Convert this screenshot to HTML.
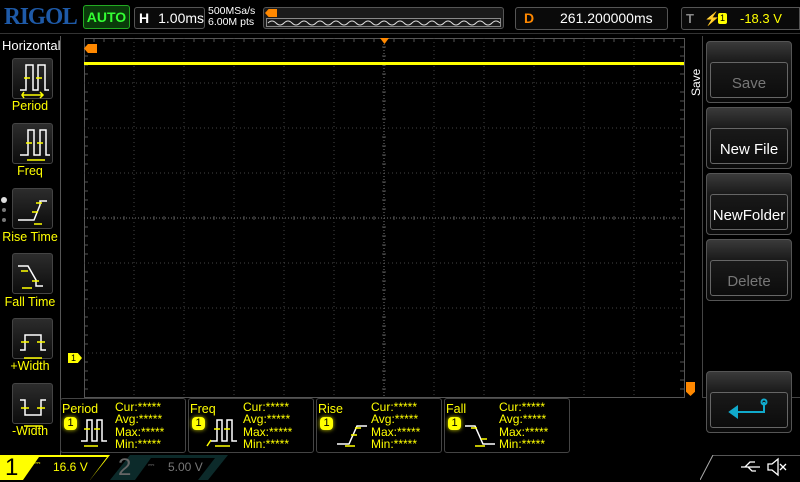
<!DOCTYPE html>
<html><head><meta charset="utf-8"><style>
*{margin:0;padding:0;box-sizing:border-box}
body{width:800px;height:480px;background:#000;overflow:hidden;position:relative;font-family:"Liberation Sans",sans-serif}
.a{position:absolute}
.btn{position:absolute;left:12px;width:41px;height:41px;border:1px solid #444;border-radius:3px;background:linear-gradient(#2c2c2c,#0c0c0c)}
.lbl{position:absolute;left:0;width:60px;text-align:center;color:#ff0;font-size:12.5px}
.sk{position:absolute;left:706px;width:86px;height:62px;border:1px solid #555;border-radius:4px;background:linear-gradient(#3a3a3a 0,#1a1a1a 20px,#0a0a0a)}
.sk div{position:absolute;left:3px;right:3px;top:20px;bottom:4px;border:1px solid #666;border-radius:3px;color:#fff;font-size:15px;text-align:center;line-height:42px}
.mb{position:absolute;top:398px;width:126px;height:55px;border:1px solid #444;border-radius:3px;color:#ff0;font-size:12.5px}
.mb .t{position:absolute;left:1px;top:3px}
.mb .n{position:absolute;left:3px;top:18px;width:13px;height:13px;background:#ff0;color:#000;border-radius:4px;font-size:11px;text-align:center;line-height:13px;box-shadow:0 0 4px #cc0}
.mb .v{position:absolute;left:54px;top:2px;line-height:12.3px;font-size:12px}
</style></head><body>
<div class="a" style="left:4px;top:4px;color:#1e5aa8;font-family:'Liberation Serif',serif;font-weight:bold;font-size:24px;letter-spacing:-1px;transform:scaleX(0.97);transform-origin:left">RIGOL</div>
<div class="a" style="left:83px;top:5px;width:47px;height:24px;border:1px solid #2a2;background:#0a3a0a;border-radius:3px;color:#3f3;font-weight:bold;font-size:14px;text-align:center;line-height:22px">AUTO</div>
<div class="a" style="left:134px;top:7px;width:71px;height:22px;border:1px solid #555;border-radius:3px;background:#0a0a0a;color:#fff;font-size:14px;line-height:20px"><b style="padding-left:4px">H</b><span style="padding-left:9px">1.00ms</span></div>
<div class="a" style="left:208px;top:6px;color:#fff;font-size:10.5px;line-height:11px">500MSa/s<br>6.00M pts</div>
<div class="a" style="left:263px;top:7px;width:241px;height:22px;border:1px solid #555;border-radius:3px;background:#1a1a1a"></div>
<div class="a" style="left:265px;top:9px;width:12px;height:8px;background:#f80;clip-path:polygon(0 50%,30% 0,100% 0,100% 100%,30% 100%)"></div>
<svg class="a" style="left:266px;top:18px" width="236" height="9"><rect x="0.5" y="0.5" width="234" height="8" fill="none" stroke="#888"/><path d="M2 5 q4 -4 8 0 q4 4 8 0 q4 -4 8 0 q4 4 8 0 q4 -4 8 0 q4 4 8 0 q4 -4 8 0 q4 4 8 0 q4 -4 8 0 q4 4 8 0 q4 -4 8 0 q4 4 8 0 q4 -4 8 0 q4 4 8 0 q4 -4 8 0 q4 4 8 0 q4 -4 8 0 q4 4 8 0 q4 -4 8 0 q4 4 8 0 q4 -4 8 0 q4 4 8 0 q4 -4 8 0 q4 4 8 0 q4 -4 8 0 q4 4 8 0 q4 -4 8 0 q4 4 8 0 q4 -4 8 0" fill="none" stroke="#ddd" stroke-width="1"/></svg>
<div class="a" style="left:515px;top:7px;width:153px;height:23px;border:1px solid #555;border-radius:3px;background:#0a0a0a;font-size:14px;line-height:21px"><b style="color:#f80;padding-left:8px">D</b><span style="color:#fff;position:absolute;left:44px">261.200000ms</span></div>
<div class="a" style="left:681px;top:7px;width:119px;height:23px;border:1px solid #555;border-radius:3px 0 0 3px;background:#0a0a0a;font-size:13px;line-height:21px"><b style="color:#888;padding-left:4px">T</b><span style="color:#ff0;position:absolute;left:22px">⚡</span><span style="position:absolute;left:36px;top:5px;width:9px;height:11px;background:#ff0;color:#000;font-size:9px;line-height:11px;text-align:center;border-radius:2px">1</span><span style="color:#ff0;position:absolute;left:58px">-18.3 V</span></div>
<div class="a" style="left:0;top:33px;width:800px;height:1px;background:#333"></div>
<div class="a" style="left:60px;top:36px;width:1px;height:420px;background:#555"></div>
<div class="a" style="left:2px;top:38px;color:#fff;font-size:13px">Horizontal</div>
<div class="btn" style="top:58px"></div><div class="btn" style="top:123px"></div><div class="btn" style="top:188px"></div><div class="btn" style="top:253px"></div><div class="btn" style="top:318px"></div><div class="btn" style="top:383px"></div>
<svg class="a" style="left:12px;top:58px" width="41" height="390" fill="none" stroke-width="1.5">
<g stroke="#fff"><path d="M8 32H14V7H21V32H26V7H33V32H37"/><path d="M8 97H16V72H22V97H28V72H34V97H38"/><path d="M6 162H22L28 147V143H35"/><path d="M6 208H16L24 222V228H31"/><path d="M8 292H13V277H29V292H34"/><path d="M8 342H13V357H29V342H34"/></g>
<g stroke="#ff0"><path d="M12 20H18M24 20H30M11 37H30M12 34L10 37L12 40M28 34L31 37L28 40"/><path d="M14 85H20M25 85H31M15 102H33"/><path d="M20 154H26M24 145H30M22 166H30"/><path d="M9 213H16M20 223H27M10 230H20"/><path d="M9 284H17M25 284H33M12 300H30"/><path d="M9 350H17M25 350H33M12 368H30"/></g>
</svg>
<div class="lbl" style="top:99px">Period</div><div class="lbl" style="top:164px">Freq</div><div class="lbl" style="top:230px">Rise Time</div><div class="lbl" style="top:295px">Fall Time</div><div class="lbl" style="top:359px">+Width</div><div class="lbl" style="top:424px">-Width</div>
<div class="a" style="left:1px;top:197px;width:6px;height:6px;border-radius:3px;background:#ddd"></div>
<div class="a" style="left:2px;top:208px;width:4px;height:4px;border-radius:2px;background:#777"></div>
<div class="a" style="left:2px;top:218px;width:4px;height:4px;border-radius:2px;background:#777"></div>
<svg class="a" style="left:84px;top:38px" width="602" height="362">
<rect x="0.5" y="0.5" width="600" height="359" fill="none" stroke="#555"/>
<g stroke="#444" stroke-dasharray="1 3">
<path d="M50 0V360M100 0V360M150 0V360M200 0V360M250 0V360M350 0V360M400 0V360M450 0V360M500 0V360M550 0V360"/>
<path d="M0 45H600M0 90H600M0 135H600M0 225H600M0 270H600M0 315H600"/>
</g>
<g stroke="#777" stroke-dasharray="1 2"><path d="M300 0V360M0 180H600"/></g>
<g stroke="#555"><path d="M10 0v4M20 0v4M30 0v4M40 0v4M60 0v4M70 0v4M80 0v4M90 0v4M110 0v4M120 0v4M130 0v4M140 0v4M160 0v4M170 0v4M180 0v4M190 0v4M210 0v4M220 0v4M230 0v4M240 0v4M260 0v4M270 0v4M280 0v4M290 0v4M310 0v4M320 0v4M330 0v4M340 0v4M360 0v4M370 0v4M380 0v4M390 0v4M410 0v4M420 0v4M430 0v4M440 0v4M460 0v4M470 0v4M480 0v4M490 0v4M510 0v4M520 0v4M530 0v4M540 0v4M560 0v4M570 0v4M580 0v4M590 0v4"/>
<path d="M0 9h4M0 18h4M0 27h4M0 36h4M0 54h4M0 63h4M0 72h4M0 81h4M0 99h4M0 108h4M0 117h4M0 126h4M0 144h4M0 153h4M0 162h4M0 171h4M0 189h4M0 198h4M0 207h4M0 216h4M0 234h4M0 243h4M0 252h4M0 261h4M0 279h4M0 288h4M0 297h4M0 306h4M0 324h4M0 333h4M0 342h4M0 351h4"/>
<path d="M596 9h4M596 18h4M596 27h4M596 36h4M596 54h4M596 63h4M596 72h4M596 81h4M596 99h4M596 108h4M596 117h4M596 126h4M596 144h4M596 153h4M596 162h4M596 171h4M596 189h4M596 198h4M596 207h4M596 216h4M596 234h4M596 243h4M596 252h4M596 261h4M596 279h4M596 288h4M596 297h4M596 306h4M596 324h4M596 333h4M596 342h4M596 351h4"/>
<path d="M10 178v4M20 178v4M30 178v4M40 178v4M60 178v4M70 178v4M80 178v4M90 178v4M110 178v4M120 178v4M130 178v4M140 178v4M160 178v4M170 178v4M180 178v4M190 178v4M210 178v4M220 178v4M230 178v4M240 178v4M260 178v4M270 178v4M280 178v4M290 178v4M310 178v4M320 178v4M330 178v4M340 178v4M360 178v4M370 178v4M380 178v4M390 178v4M410 178v4M420 178v4M430 178v4M440 178v4M460 178v4M470 178v4M480 178v4M490 178v4M510 178v4M520 178v4M530 178v4M540 178v4M560 178v4M570 178v4M580 178v4M590 178v4"/>
<path d="M298 9h4M298 18h4M298 27h4M298 36h4M298 54h4M298 63h4M298 72h4M298 81h4M298 99h4M298 108h4M298 117h4M298 126h4M298 144h4M298 153h4M298 162h4M298 171h4M298 189h4M298 198h4M298 207h4M298 216h4M298 234h4M298 243h4M298 252h4M298 261h4M298 279h4M298 288h4M298 297h4M298 306h4M298 324h4M298 333h4M298 342h4M298 351h4"/>
</g>
<rect x="0" y="24" width="600" height="3" fill="#ff0"/>
</svg>
<div class="a" style="left:84px;top:44px;width:13px;height:9px;background:#f80;clip-path:polygon(0 50%,30% 0,100% 0,100% 100%,30% 100%)"></div>
<div class="a" style="left:380px;top:38px;width:9px;height:6px;background:#f80;clip-path:polygon(0 0,100% 0,50% 100%)"></div>
<div class="a" style="left:68px;top:353px;width:14px;height:10px;background:#ff0;clip-path:polygon(0 0,70% 0,100% 50%,70% 100%,0 100%);color:#000;font-size:9px;line-height:10px;padding-left:3px">1</div>
<div class="a" style="left:686px;top:382px;width:9px;height:14px;background:#f80;clip-path:polygon(0 0,100% 0,100% 70%,50% 100%,0 70%)"></div>
<div class="a" style="left:702px;top:36px;width:1px;height:362px;background:#444"></div>
<div class="a" style="left:702px;top:397px;width:98px;height:1px;background:#444"></div>
<div class="a" style="color:#fff;font-size:12px;transform:rotate(-90deg);transform-origin:left top;top:96px;left:689px">Save</div>
<div class="sk" style="top:41px"><div style="color:#777">Save</div></div>
<div class="sk" style="top:107px"><div>New File</div></div>
<div class="sk" style="top:173px"><div>NewFolder</div></div>
<div class="sk" style="top:239px"><div style="color:#777">Delete</div></div>
<div class="sk" style="top:371px"><div></div></div>
<svg class="a" style="left:728px;top:398px" width="44" height="24" fill="none" stroke="#1ac" stroke-width="2"><path d="M36 4V14H8"/><circle cx="36" cy="4" r="2.5"/><path d="M2 14L9 9V19Z" fill="#1ac"/></svg>
<div class="mb" style="left:60px"><span class="t">Period</span><span class="n">1</span><span class="v">Cur:*****<br>Avg:*****<br>Max:*****<br>Min:*****</span>
<svg class="a" style="left:18px;top:18px" width="34" height="34" fill="none"><path d="M2 24H8V3H13V24H18V3H23V24H28" stroke="#fff" stroke-width="1.5"/><path d="M5 12H11M15 12H21M5 29H19" stroke="#ff0" stroke-width="1.5"/></svg></div>
<div class="mb" style="left:188px"><span class="t">Freq</span><span class="n">1</span><span class="v">Cur:*****<br>Avg:*****<br>Max:*****<br>Min:*****</span>
<svg class="a" style="left:16px;top:18px" width="34" height="34" fill="none"><path d="M6 24H12V3H17V24H22V3H27V24H32" stroke="#fff" stroke-width="1.5"/><path d="M9 12H15M19 12H25M10 29H25M2 29L6 23" stroke="#ff0" stroke-width="1.5"/></svg></div>
<div class="mb" style="left:316px"><span class="t">Rise</span><span class="n">1</span><span class="v">Cur:*****<br>Avg:*****<br>Max:*****<br>Min:*****</span>
<svg class="a" style="left:18px;top:18px" width="34" height="34" fill="none"><path d="M2 27H14L22 9H32" stroke="#fff" stroke-width="1.5"/><path d="M16 18H22M20 11H26M10 29H20" stroke="#ff0" stroke-width="1.5"/></svg></div>
<div class="mb" style="left:444px"><span class="t">Fall</span><span class="n">1</span><span class="v">Cur:*****<br>Avg:*****<br>Max:*****<br>Min:*****</span>
<svg class="a" style="left:18px;top:18px" width="34" height="34" fill="none"><path d="M2 9H12L20 27H32" stroke="#fff" stroke-width="1.5"/><path d="M8 11H14M18 22H24M12 29H22" stroke="#ff0" stroke-width="1.5"/></svg></div>
<div class="a" style="left:0;top:455px;width:110px;height:25px;background:#ff0;clip-path:polygon(0 0,100% 0,calc(100% - 20px) 100%,0 100%)"></div>
<div class="a" style="left:23px;top:457px;width:84px;height:23px;background:#000;clip-path:polygon(16px 0,100% 0,calc(100% - 17px) 100%,0 100%)"></div>
<div class="a" style="left:5px;top:454px;color:#000;font-size:24px">1</div>
<div class="a" style="left:34px;top:458px;color:#ff0;font-size:8px">⎓</div>
<div class="a" style="left:53px;top:460px;color:#ff0;font-size:12px">16.6 V</div>
<div class="a" style="left:110px;top:455px;width:118px;height:25px;background:#0c2a2a;clip-path:polygon(20px 0,100% 0,calc(100% - 20px) 100%,0 100%)"></div>
<div class="a" style="left:135px;top:458px;width:80px;height:22px;background:#000;clip-path:polygon(16px 0,100% 0,calc(100% - 17px) 100%,0 100%)"></div>
<div class="a" style="left:118px;top:454px;color:#666;font-size:24px">2</div>
<div class="a" style="left:148px;top:460px;color:#666;font-size:8px">⎓</div>
<div class="a" style="left:168px;top:460px;color:#777;font-size:12px">5.00 V</div>
<svg class="a" style="left:700px;top:455px" width="100" height="25" fill="none" stroke="#aaa"><path d="M0 25L13 0H100"/><g stroke="#fff" stroke-width="1.3"><path d="M41 12H60M45 12L50 7H55M48 12L52 16H56"/><path d="M68 9H72L78 4V20L72 15H68Z"/><path d="M80 9L86 15M86 9L80 15"/></g></svg>
</body></html>
